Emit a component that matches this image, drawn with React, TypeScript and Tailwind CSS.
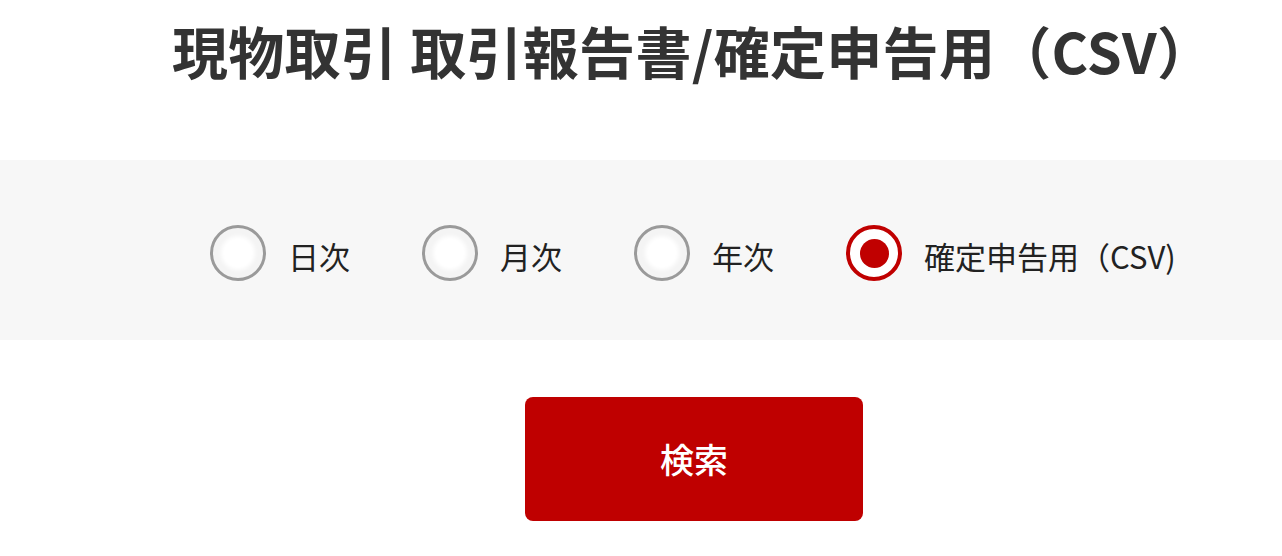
import React from "react";

const items = [
  { label: "日次", checked: false },
  { label: "月次", checked: false },
  { label: "年次", checked: false },
  { label: "確定申告用（CSV)", checked: true },
];

function Radio({ checked }: { checked: boolean }) {
  if (checked) {
    return (
      <span className="flex h-[56px] w-[56px] shrink-0 items-center justify-center rounded-full border-[4px] border-[#c00000] bg-white">
        <span className="h-[29px] w-[29px] rounded-full bg-[#c00000]" />
      </span>
    );
  }
  return (
    <span className="flex h-[56px] w-[56px] shrink-0 items-center justify-center rounded-full border-[3px] border-[#9a9a9a] bg-[#f4f4f4]">
      <span className="h-[34px] w-[34px] rounded-full bg-white blur-[2px]" />
    </span>
  );
}

export default function App() {
  return (
    <div
      className="h-[556px] w-[1282px] overflow-hidden bg-white text-[#333]"
      style={{ fontFamily: '"Noto Sans CJK JP", "Noto Sans", sans-serif' }}
    >
      <div className="flex h-[160px] items-start pl-[172px] pt-[12px]">
        <h1 className="whitespace-nowrap text-[56px] font-bold leading-[76px] tracking-[0.3px] text-[#333]">
          現物取引 取引報告書/確定申告用（CSV）
        </h1>
      </div>
      <div className="flex h-[180px] items-center bg-[#f7f7f7] pl-[210px] pt-[6px]">
        <div className="flex items-center gap-[72px]">
          {items.map((it) => (
            <label key={it.label} className="flex items-center gap-[22px]">
              <Radio checked={it.checked} />
              <span className="pt-[4px] text-[31px] leading-none text-[#222]">{it.label}</span>
            </label>
          ))}
        </div>
      </div>
      <div className="flex pl-[525px] pt-[57px]">
        <button className="flex h-[124px] w-[338px] items-center justify-center rounded-[8px] bg-[#bf0000] pb-[2px] text-[34px] font-medium text-white">
          検索
        </button>
      </div>
    </div>
  );
}
